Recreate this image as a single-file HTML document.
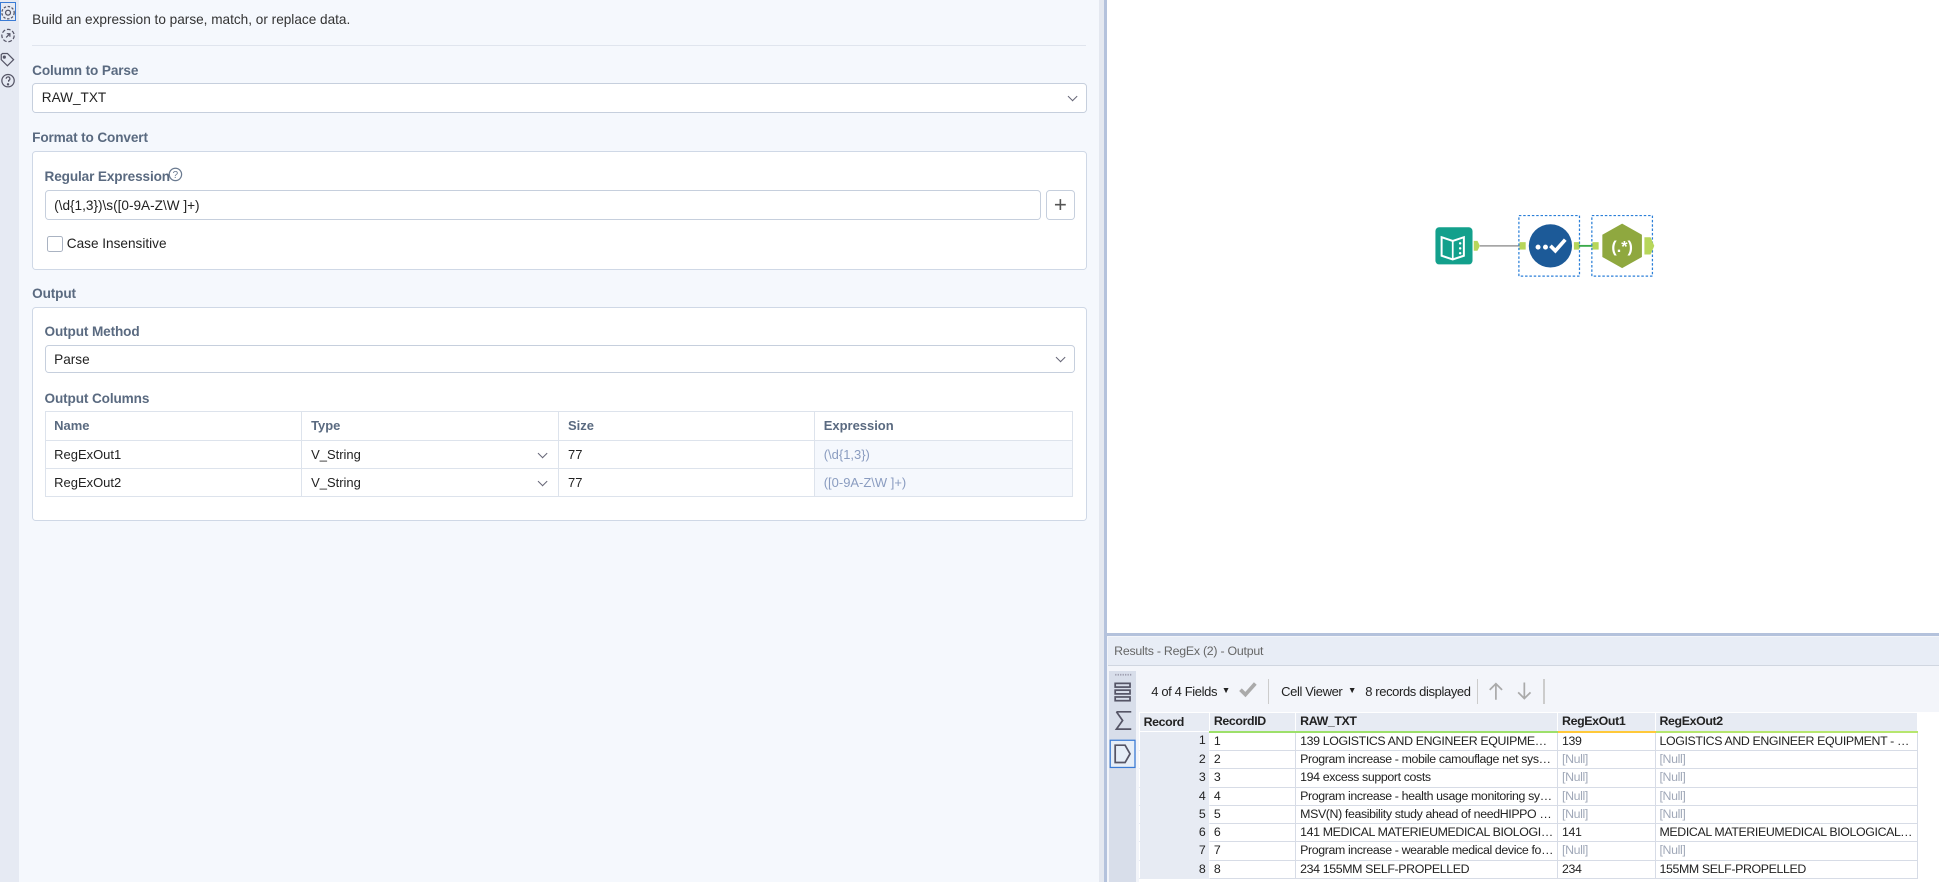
<!DOCTYPE html>
<html><head><meta charset="utf-8"><style>
html,body{margin:0;padding:0;width:1939px;height:881px;overflow:hidden;background:#f5f8fd}
#w{position:absolute;left:0;top:0;width:1568px;height:713px;zoom:1.2366;font-family:"Liberation Sans",sans-serif;color:#222}
.a{position:absolute}
.lbl{position:absolute;font-size:11px;font-weight:bold;color:#5a6a80;letter-spacing:-0.1px}
.box{position:absolute;background:#fff;border:1px solid #cfd8e6;border-radius:3px;box-sizing:border-box}
.inp{position:absolute;background:#fff;border:1px solid #c6cfdd;border-radius:3px;box-sizing:border-box;font-size:11px;padding:0 7px;display:flex;align-items:center}
.chev{position:absolute;right:8px;top:50%;width:5px;height:5px;border-right:1.1px solid #667;border-bottom:1.1px solid #667;transform:translateY(-70%) rotate(45deg)}
table{border-collapse:collapse}
.ot td{border:1px solid #dde3ec;height:22px;padding:0 7px;font-size:10.5px}
.ot tr:first-child td{font-weight:bold;color:#5a6a80;height:23px}
.rt{font-size:10px;letter-spacing:-0.3px;table-layout:fixed}
.rt td{border:1px solid #d7dce6;height:14px;padding:0 3px;white-space:nowrap;overflow:hidden;text-overflow:ellipsis;line-height:14px}
.rt td:first-child{background:#e7ebf3;text-align:right;border-color:#e7ebf3 #fff}
.rt tr.h td{background:#e7ebf3;font-weight:bold;border-color:#fff}
.nl{color:#a0a8b8}
.tb{font-size:10.5px;letter-spacing:-0.3px}
</style></head><body><div id="w">
<!-- left rail -->
<div class="a" style="left:0;top:0;width:15px;height:713px;background:#e6eaf3"></div>
<div class="a" style="left:0;top:2px;width:13px;height:15px;border:1px solid #3a7bd5;box-sizing:border-box"></div>
<svg class="a" style="left:0;top:3px" width="14" height="72" viewBox="0 0 14 72" fill="none" stroke="#556" stroke-width="1">
<circle cx="6.5" cy="7" r="2"/><circle cx="6.5" cy="7" r="5" stroke-dasharray="2 1.3"/>
<circle cx="6.5" cy="25.5" r="5" stroke-dasharray="3 1.5"/><path d="M5 27l3-3M5.5 24h2.5v2.5"/>
<path d="M1 41v4l5 5 5-5-5-5h-4z"/><circle cx="3.5" cy="43" r=".8" fill="#556"/>
<circle cx="6.5" cy="62" r="5"/><path d="M5 60.5a1.5 1.5 0 1 1 2 1.4v1"/><circle cx="6.5" cy="65" r=".5" fill="#556"/>
</svg>
<!-- left panel -->
<div class="a" style="left:15px;top:0;width:874px;height:713px;background:#f5f8fd"></div>
<div class="a" style="left:26px;top:10px;font-size:11px;color:#333">Build an expression to parse, match, or replace data.</div>
<div class="a" style="left:26px;top:36px;width:852px;height:1px;background:#e0e5ee"></div>
<div class="lbl" style="left:26px;top:51px">Column to Parse</div>
<div class="inp" style="left:26px;top:67px;width:853px;height:24px">RAW_TXT<span class="chev"></span></div>
<div class="lbl" style="left:26px;top:105px">Format to Convert</div>
<div class="box" style="left:26px;top:122px;width:853px;height:96px"></div>
<div class="lbl" style="left:36px;top:137px">Regular Expression</div>
<svg class="a" style="left:136px;top:135px" width="12" height="12"><circle cx="6" cy="6" r="5" fill="none" stroke="#6a7a90"/><text x="6" y="9" font-size="8" text-anchor="middle" fill="#6a7a90" font-family="Liberation Sans">?</text></svg>
<div class="inp" style="left:36px;top:154px;width:806px;height:24px">(\d{1,3})\s([0-9A-Z\W ]+)</div>
<div class="inp" style="left:846px;top:154px;width:23px;height:24px;padding:0;justify-content:center;font-size:18px;color:#555">+</div>
<div class="a" style="left:38px;top:191px;width:11px;height:11px;border:1px solid #aab3c2;background:#fff;border-radius:2px"></div>
<div class="a" style="left:54px;top:191px;font-size:11px">Case Insensitive</div>
<div class="lbl" style="left:26px;top:231px">Output</div>
<div class="box" style="left:26px;top:248px;width:853px;height:173px"></div>
<div class="lbl" style="left:36px;top:262px">Output Method</div>
<div class="inp" style="left:36px;top:279px;width:833px;height:23px">Parse<span class="chev"></span></div>
<div class="lbl" style="left:36px;top:316px">Output Columns</div>
<table class="ot a" style="left:36px;top:332px;width:832px">
<tr><td style="width:193px">Name</td><td style="width:193px">Type</td><td style="width:192px">Size</td><td>Expression</td></tr>
<tr><td>RegExOut1</td><td style="position:relative">V_String<span class="chev" style="right:10px"></span></td><td>77</td><td style="background:#f5f8fd;color:#8a9cc0">(\d{1,3})</td></tr>
<tr><td>RegExOut2</td><td style="position:relative">V_String<span class="chev" style="right:10px"></span></td><td>77</td><td style="background:#f5f8fd;color:#8a9cc0">([0-9A-Z\W ]+)</td></tr>
</table>
<!-- divider -->
<div class="a" style="left:889px;top:0;width:4px;height:713px;background:#e4e8f0"></div>
<div class="a" style="left:893px;top:0;width:2px;height:713px;background:#b4c2dc"></div>
<!-- canvas -->
<div class="a" style="left:895px;top:0;width:673px;height:512px;background:#fff"></div>
<svg class="a" style="left:1155px;top:170px" width="190" height="60" viewBox="0 0 190 60">
<rect x="6" y="14" width="30" height="30" rx="3" fill="#13a08c"/>
<path d="M11 22l9 3 9-3v15l-9 3-9-3z" fill="none" stroke="#fff" stroke-width="1.6"/><path d="M20 25v15" stroke="#fff" stroke-width="1.4"/><circle cx="26" cy="27" r="1" fill="#fff"/><circle cx="26" cy="31" r="1" fill="#fff"/><circle cx="26" cy="35" r="1" fill="#fff"/>
<path d="M37 25h3l2 4-2 4h-3z" fill="#b7d65a"/>
<line x1="42" y1="29" x2="75" y2="29" stroke="#999" stroke-width="1.2"/>
<rect x="73.5" y="4.5" width="49" height="49" fill="none" stroke="#2b7fd8" stroke-dasharray="2 1.5"/>
<path d="M74 26h5v6h-5z" fill="#b7d65a"/>
<circle cx="99" cy="29" r="17.5" fill="#1c5a98"/>
<circle cx="89" cy="30" r="2" fill="#fff"/><circle cx="95" cy="30" r="2" fill="#fff"/><path d="M99 29l4 4 8-9" fill="none" stroke="#fff" stroke-width="3"/>
<path d="M118 26h4l1 3-1 3h-4z" fill="#b7d65a"/>
<line x1="122" y1="29" x2="133" y2="29" stroke="#3aaa4a" stroke-width="1.5"/>
<rect x="132.5" y="4.5" width="49" height="49" fill="none" stroke="#2b7fd8" stroke-dasharray="2 1.5"/>
<path d="M133 26h5v6h-5z" fill="#b7d65a"/>
<path d="M157 11l16 9v18l-16 9-16-9v-18z" fill="#8fa83f"/>
<text x="157" y="34" font-size="13" font-weight="bold" fill="#fff" text-anchor="middle" font-family="Liberation Sans">(.*)</text>
<path d="M175 22h5l3 7-3 7h-5z" fill="#b7d65a"/>
</svg>
<!-- results -->
<div class="a" style="left:895px;top:512px;width:673px;height:2px;background:#b4c2dc"></div>
<div class="a" style="left:895px;top:514px;width:673px;height:199px;background:#f3f5fa"></div>
<div class="a" style="left:896px;top:515px;width:672px;height:23px;background:#e8edf6;border-bottom:1px solid #d0d6e0"></div>
<div class="a" style="left:901px;top:521px;font-size:10px;color:#666;letter-spacing:-0.2px">Results - RegEx (2) - Output</div>
<div class="a" style="left:897px;top:543px;width:22px;height:170px;background:#d8deea"></div>
<svg class="a" style="left:897px;top:543px" width="24" height="82" fill="none" stroke="#556" stroke-width="1.4">
<path d="M5 3h14" stroke="#99a" stroke-dasharray="1 1"/>
<rect x="5" y="10" width="12" height="3"/><rect x="5" y="15.5" width="12" height="3"/><rect x="5" y="21" width="12" height="3"/>
<path d="M6 33h12M6 33l5 7-5 7h12"/>
<rect x="1" y="56" width="20" height="22" fill="#e6eef8" stroke="#3a7bd5" stroke-width="1"/>
<path d="M5 60h8l4 7-4 7h-8z"/>
</svg>
<div class="a tb" style="left:931px;top:553px">4 of 4 Fields</div>
<div class="a" style="left:988px;top:554px;font-size:7px">▼</div>
<svg class="a" style="left:1001px;top:551px" width="16" height="14"><path d="M2 7l4 4 8-9" fill="none" stroke="#aaa" stroke-width="3"/></svg>
<div class="a" style="left:1025px;top:549px;width:1px;height:20px;background:#ccc"></div>
<div class="a tb" style="left:1036px;top:553px">Cell Viewer</div>
<div class="a" style="left:1090px;top:554px;font-size:7px">▼</div>
<div class="a tb" style="left:1104px;top:553px">8 records displayed</div>
<div class="a" style="left:1194px;top:549px;width:1px;height:20px;background:#ccc"></div>
<svg class="a" style="left:1202px;top:550px" width="40" height="18" fill="none" stroke="#aaa" stroke-width="1.4"><path d="M8 16V3M3 8l5-5 5 5M31 2v13M26 10l5 5 5-5"/></svg>
<div class="a" style="left:1248px;top:549px;width:1px;height:20px;background:#ccc"></div>
<div class="a" style="left:921px;top:576px;width:647px;height:137px;background:#fff"></div>
<table class="rt a" style="left:921px;top:576px;width:630px">
<tr class="h"><td style="width:50px;text-align:left">Record</td><td style="width:63px;border-bottom:2px solid #9de06a">RecordID</td><td style="width:205px;border-bottom:2px solid #9de06a">RAW_TXT</td><td style="width:72px;border-bottom:2px solid #ffc93a">RegExOut1</td><td style="border-bottom:2px solid #b6e66e">RegExOut2</td></tr>
<tr><td>1</td><td>1</td><td>139 LOGISTICS AND ENGINEER EQUIPMENT - SDD</td><td>139</td><td>LOGISTICS AND ENGINEER EQUIPMENT - SDD</td></tr>
<tr><td>2</td><td>2</td><td>Program increase - mobile camouflage net systems</td><td class="nl">[Null]</td><td class="nl">[Null]</td></tr>
<tr><td>3</td><td>3</td><td>194 excess support costs</td><td class="nl">[Null]</td><td class="nl">[Null]</td></tr>
<tr><td>4</td><td>4</td><td>Program increase - health usage monitoring systems</td><td class="nl">[Null]</td><td class="nl">[Null]</td></tr>
<tr><td>5</td><td>5</td><td>MSV(N) feasibility study ahead of needHIPPO POD</td><td class="nl">[Null]</td><td class="nl">[Null]</td></tr>
<tr><td>6</td><td>6</td><td>141 MEDICAL MATERIEUMEDICAL BIOLOGICAL DEFENSE</td><td>141</td><td>MEDICAL MATERIEUMEDICAL BIOLOGICAL DEFENSE EQUIP</td></tr>
<tr><td>7</td><td>7</td><td>Program increase - wearable medical device for TBI</td><td class="nl">[Null]</td><td class="nl">[Null]</td></tr>
<tr><td>8</td><td>8</td><td>234 155MM SELF-PROPELLED</td><td>234</td><td>155MM SELF-PROPELLED</td></tr>
</table>
</div></body></html>
